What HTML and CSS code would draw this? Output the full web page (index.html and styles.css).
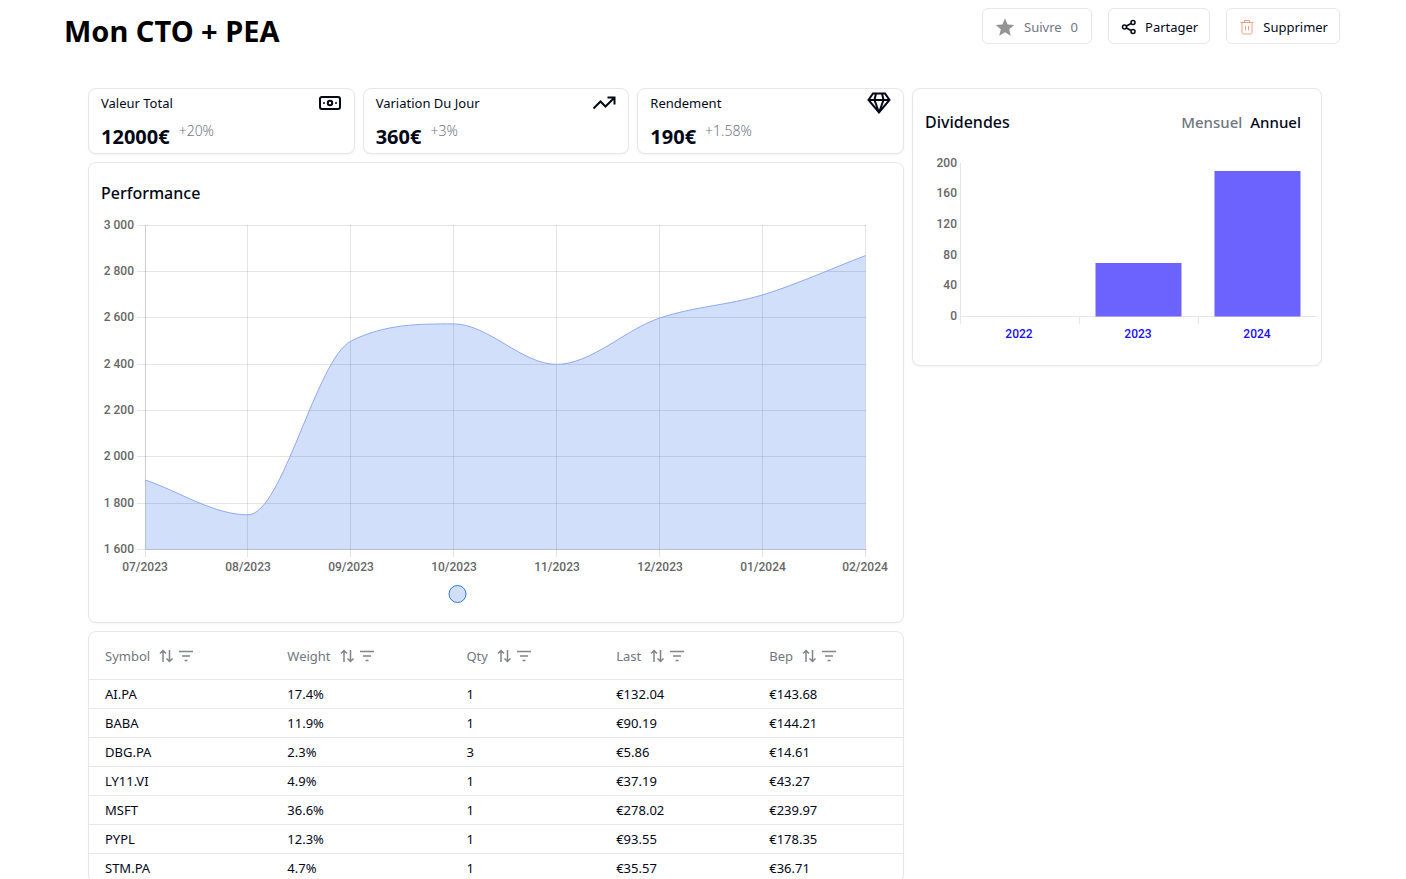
FILE: index.html
```html
<!DOCTYPE html>
<html lang="fr">
<head>
<meta charset="utf-8">
<meta name="viewport" content="width=device-width, initial-scale=1">
<title>Mon CTO + PEA</title>
<link rel="stylesheet" href="styles.css">
</head>
<body>
<svg class="defs" aria-hidden="true">
  <symbol id="sort" viewBox="0 0 14 14"><path d="M4 13V1.500M1 4.500 4 1.500 7 4.500M10.500 1V12.500M7.500 9.500 10.500 12.500 13.500 9.500"/></symbol>
  <symbol id="filter" viewBox="0 0 14 14"><path d="M0 2.500H14M3 7H11M5.500 11.500H8.500"/></symbol>
</svg>
<header class="top">
  <h1>Mon CTO + PEA</h1>
  <div class="actions">
    <button class="btn muted" type="button">
      <svg class="star" viewBox="0 0 24 24" aria-hidden="true"><path d="M12 1.500l3.100 7.400 8 .7-6.100 5.200 1.900 7.800L12 18.400l-6.900 4.200L7 14.800.9 9.600l8-.7z"/></svg>
      <span>Suivre</span><span>0</span>
    </button>
    <button class="btn" type="button">
      <svg class="share" viewBox="0 0 16 16" aria-hidden="true"><circle cx="3.500" cy="8" r="2"/><circle cx="12" cy="3.500" r="2"/><circle cx="12" cy="12.500" r="2"/><path d="M5.500 7l4.500-2.500M5.500 9l4.500 2.500"/></svg>
      <span>Partager</span>
    </button>
    <button class="btn" type="button">
      <svg class="trash" viewBox="0 0 16 16" aria-hidden="true"><path d="M1.500 3.500h13M5.500 3.500v-2h5v2M3 3.500v10q0 1.500 1.500 1.500h7q1.500 0 1.500-1.500v-10M6.500 7v4.500M9.500 7v4.500"/></svg>
      <span>Supprimer</span>
    </button>
  </div>
</header>

<main class="board">
  <div class="main-col">
    <section class="stats">
      <article class="card stat">
        <div class="stat-head"><h2>Valeur Total</h2>
          <svg class="ico" viewBox="0 0 24 24" aria-hidden="true"><rect x="2" y="6" width="20" height="12" rx="2"/><circle cx="12" cy="12" r="2.200"/><path d="M6 12h.01M18 12h.01"/></svg></div>
        <p class="figure"><strong>12000€</strong><span>+20%</span></p>
      </article>
      <article class="card stat">
        <div class="stat-head"><h2>Variation Du Jour</h2>
          <svg class="ico sharp" viewBox="0 0 24 24" aria-hidden="true"><path d="M1.500 17.500 8.500 10.500 13.500 15.500 22 7M15.500 6.500H22.500V13.500"/></svg></div>
        <p class="figure"><strong>360€</strong><span>+3%</span></p>
      </article>
      <article class="card stat">
        <div class="stat-head"><h2>Rendement</h2>
          <svg class="ico sharp" viewBox="0 0 24 24" aria-hidden="true"><path d="M6 2.500H18L22.500 9 12 21.500 1.500 9ZM1.500 9H22.500M12 21.500 7.500 9 9 2.500M12 21.500 16.500 9 15 2.500"/></svg></div>
        <p class="figure"><strong>190€</strong><span>+1.58%</span></p>
      </article>
    </section>

    <section class="card perf">
      <h2 class="title">Performance</h2>
      <svg class="chart" viewBox="0 0 790 397" role="img" aria-label="Performance">
        <path class="area" d="M44.500 267.100C78.800 278.700 112.500 301.800 147 301.800C181.300 301.800 215.500 145.600 249.800 128.200C284 110.800 318 110.900 352.700 110.900C387 110.900 421 151.400 455.500 151.400C490 151.400 524 116.700 558.400 105.100C592.700 93.500 627 92.400 661.300 82C695.500 71.600 730 55.700 764.500 42.600V336.500H44.500Z"/>
        <path class="grid" d="M36 12.500H765M36 58.500H765M36 104.500H765M36 151.500H765M36 197.500H765M36 243.500H765M36 290.500H765M36 336.500H765M146.500 12V344M249.500 12V344M352.500 12V344M455.500 12V344M558.500 12V344M661.500 12V344M764.500 12V344M44.500 12V344"/>
        <path class="grid" d="M44.500 12V336M45 336.500H765"/>
        <path class="line" d="M44.500 267.100C78.800 278.700 112.500 301.800 147 301.800C181.300 301.800 215.500 145.600 249.800 128.200C284 110.800 318 110.900 352.700 110.900C387 110.900 421 151.400 455.500 151.400C490 151.400 524 116.700 558.400 105.100C592.700 93.500 627 92.400 661.300 82C695.500 71.600 730 55.700 764.500 42.600"/>
        <g class="tick end">
          <text x="33" y="16">3 000</text><text x="33" y="62">2 800</text><text x="33" y="108">2 600</text><text x="33" y="155">2 400</text><text x="33" y="201">2 200</text><text x="33" y="247">2 000</text><text x="33" y="294">1 800</text><text x="33" y="340">1 600</text>
        </g>
        <g class="tick mid">
          <text x="44" y="358">07/2023</text><text x="147" y="358">08/2023</text><text x="250" y="358">09/2023</text><text x="353" y="358">10/2023</text><text x="456" y="358">11/2023</text><text x="559" y="358">12/2023</text><text x="662" y="358">01/2024</text><text x="764" y="358">02/2024</text>
        </g>
        <circle class="legend" cx="356.500" cy="381" r="8.500"/>
      </svg>
    </section>

    <section class="card holdings">
      <table>
        <thead><tr>
          <th><div class="th">Symbol<button type="button" aria-label="Trier par Symbol"><svg><use href="#sort"/></svg></button><button type="button" aria-label="Filtrer Symbol"><svg><use href="#filter"/></svg></button></div></th>
          <th><div class="th">Weight<button type="button" aria-label="Trier par Weight"><svg><use href="#sort"/></svg></button><button type="button" aria-label="Filtrer Weight"><svg><use href="#filter"/></svg></button></div></th>
          <th><div class="th">Qty<button type="button" aria-label="Trier par Qty"><svg><use href="#sort"/></svg></button><button type="button" aria-label="Filtrer Qty"><svg><use href="#filter"/></svg></button></div></th>
          <th><div class="th">Last<button type="button" aria-label="Trier par Last"><svg><use href="#sort"/></svg></button><button type="button" aria-label="Filtrer Last"><svg><use href="#filter"/></svg></button></div></th>
          <th><div class="th">Bep<button type="button" aria-label="Trier par Bep"><svg><use href="#sort"/></svg></button><button type="button" aria-label="Filtrer Bep"><svg><use href="#filter"/></svg></button></div></th>
        </tr></thead>
        <tbody>
          <tr><td>AI.PA</td><td>17.4%</td><td>1</td><td>€132.04</td><td>€143.68</td></tr>
          <tr><td>BABA</td><td>11.9%</td><td>1</td><td>€90.19</td><td>€144.21</td></tr>
          <tr><td>DBG.PA</td><td>2.3%</td><td>3</td><td>€5.86</td><td>€14.61</td></tr>
          <tr><td>LY11.VI</td><td>4.9%</td><td>1</td><td>€37.19</td><td>€43.27</td></tr>
          <tr><td>MSFT</td><td>36.6%</td><td>1</td><td>€278.02</td><td>€239.97</td></tr>
          <tr><td>PYPL</td><td>12.3%</td><td>1</td><td>€93.55</td><td>€178.35</td></tr>
          <tr><td>STM.PA</td><td>4.7%</td><td>1</td><td>€35.57</td><td>€36.71</td></tr>
        </tbody>
      </table>
    </section>
  </div>

  <aside class="card dividends">
    <div class="div-head">
      <h2 class="title">Dividendes</h2>
      <div class="tabs"><button type="button">Mensuel</button><button class="on" type="button">Annuel</button></div>
    </div>
    <svg class="chart" viewBox="0 0 408 215" role="img" aria-label="Dividendes">
      <path class="grid" d="M47.500 13V174M48 166.500H404M166.500 167V174M285.500 167V174"/>
      <path class="bar" d="M182.500 113H268.500V166.500H182.500ZM301.500 21H387.500V166.500H301.500Z"/>
      <g class="tick end">
        <text x="44" y="17">200</text><text x="44" y="47">160</text><text x="44" y="78">120</text><text x="44" y="109">80</text><text x="44" y="139">40</text><text x="44" y="170">0</text>
      </g>
      <g class="tick mid blue">
        <text x="106" y="188">2022</text><text x="225" y="188">2023</text><text x="344" y="188">2024</text>
      </g>
    </svg>
  </aside>
</main>
</body>
</html>
```

FILE: styles.css
```css
* { box-sizing: border-box; margin: 0; padding: 0; }
body {
  height: 100vh;
  overflow: hidden;
  padding: 8px 66px 0 64px;
  background: #fff;
  color: #020817;
  font: 13px/20px "Noto Sans", sans-serif;
}
button { border: 0; background: none; font: inherit; color: inherit; cursor: pointer; }
h2, th { font-size: 13px; font-weight: 400; }
.defs { display: none; }

.top { display: flex; justify-content: space-between; align-items: flex-start; height: 80px; }
h1 { color: #000; font-size: 29px; line-height: 46px; font-weight: 700; }
.actions { display: flex; gap: 16px; }
.btn {
  display: flex; align-items: center; gap: 8px; height: 36px; padding: 1px 11px 0 12px;
  border: 1px solid #e5e7eb; border-radius: 6px; background: #fff;
}
.btn svg { width: 16px; height: 16px; fill: none; }
.btn.muted { color: #71767f; gap: 9px; padding: 1px 13px 0 12px; }
.btn .star { width: 20px; height: 20px; fill: #929496; }
.btn .share { stroke: #020817; stroke-width: 1.500; }
.btn .trash { stroke: #e8a287; stroke-width: 1; }

.board {
  display: grid; grid-template-columns: minmax(0, 408fr) minmax(0, 205fr);
  gap: 8px; align-items: start; padding: 0 18px 0 24px;
}
.main-col { display: grid; gap: 8px; }
.card { border: 1px solid #e5e7eb; border-radius: 8px; background: #fff; box-shadow: 0 1px 2px rgba(0, 0, 0, .05); }
.card .title { font-size: 16px; line-height: 24px; font-weight: 500; }

.stats { display: grid; grid-template-columns: repeat(3, minmax(0, 1fr)); gap: 8px; }
.stat { height: 66px; padding: 2px 12px 0; }
.stat-head { display: flex; justify-content: space-between; align-items: center; height: 24px; }
.stat-head h2 { line-height: 24px; }
.ico { width: 24px; height: 24px; fill: none; stroke: #020817; stroke-width: 2; stroke-linecap: round; stroke-linejoin: round; }
.ico.sharp { stroke-linecap: butt; stroke-linejoin: miter; }
.figure { display: flex; gap: 9px; padding-top: 6px; }
.figure strong { font-size: 20px; line-height: 32px; font-weight: 700; }
.figure span { color: #71767f; font-size: 14px; font-weight: 300; }

.perf { padding: 18px 12px 12px; }
.perf .title { margin-bottom: 8px; }
.chart { display: block; width: 100%; height: auto; overflow: visible; }
.grid, .line { fill: none; stroke: rgba(0, 0, 0, .1); }
.area { fill: #d2dffb; }
.line { stroke: #8eaaf5; }
.legend { fill: #d2dffb; stroke: #2f7ad8; }
.bar { fill: #6c63ff; }
.tick { fill: #666; font: 500 12px Roboto, sans-serif; }
.end { text-anchor: end; }
.mid { text-anchor: middle; }
.blue { fill: #1a0dff; }

table { width: 100%; border-collapse: collapse; table-layout: fixed; }
th, td { padding: 0 0 0 16px; text-align: left; }
th { width: 18.400%; height: 48px; color: #71767f; }
th:nth-child(1) { width: 22.400%; }
th:nth-child(2) { width: 22%; }
th:nth-child(4) { width: 18.800%; }
thead th { height: 47px; padding-top: 1px; }
td { height: 29px; border-top: 1px solid #e5e7eb; }
.th { display: flex; align-items: center; gap: 6px; }
.th button { display: flex; }
.th button:first-of-type { margin-left: 3px; }
.th svg { width: 14px; height: 14px; fill: none; stroke: #80848b; stroke-width: 1.500; }

.div-head { display: flex; justify-content: space-between; align-items: center; padding: 21px 20px 16px 12px; }
.tabs { display: flex; gap: 8px; color: #71767f; font-size: 15px; line-height: 24px; font-weight: 500; }
.tabs .on { color: #020817; }
```
